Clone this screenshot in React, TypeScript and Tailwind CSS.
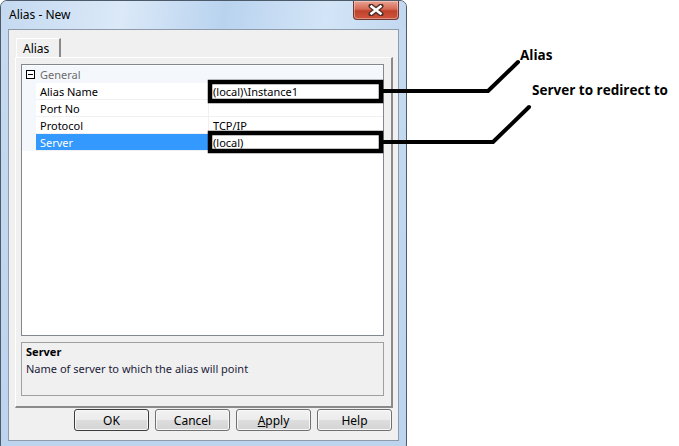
import React from "react";

type Prop = { name: string; value: string; selected?: boolean };

const props: Prop[] = [
  { name: "Alias Name", value: "(local)\\Instance1" },
  { name: "Port No", value: "" },
  { name: "Protocol", value: "TCP/IP" },
  { name: "Server", value: "(local)", selected: true },
];

function CloseButton() {
  return (
    <div className="mr-[7px] flex h-[19px] w-[46px] items-center justify-center rounded-b-[4px] border border-t-0 border-[#6d3a33] bg-[linear-gradient(180deg,#eaa394_0%,#d66a55_45%,#c0412b_55%,#d0563e_100%)] shadow-[inset_0_0_0_1px_rgba(255,255,255,0.35)]">
      <svg width="16" height="12" viewBox="0 0 16 12">
        <path d="M3 2 L13 10 M13 2 L3 10" stroke="#4a2a26" strokeWidth="5" strokeLinecap="round" />
        <path d="M3.5 2.5 L12.5 9.5 M12.5 2.5 L3.5 9.5" stroke="#ffffff" strokeWidth="2.6" strokeLinecap="square" />
      </svg>
    </div>
  );
}

function PropertyGrid() {
  return (
    <div className="h-[272px] w-[363px] border border-[#828790] bg-white pt-[1px]">
      {/* category header */}
      <div className="flex h-[17px] items-center bg-[#f4f7fc]">
        <div className="flex w-[14px] justify-end">
          <div className="mr-[1px] flex h-[9px] w-[9px] items-center justify-center border border-black bg-white">
            <div className="h-px w-[5px] bg-black" />
          </div>
        </div>
        <span className="pl-[4px] text-[#6d6d6d]">General</span>
      </div>
      {props.map((p) => (
        <div key={p.name} className="flex h-[17px]">
          <div className="w-[14px] bg-[#f4f7fc]" />
          <div
            className={
              p.selected
                ? "flex w-[172px] items-center border-b border-[#f0f0f0] bg-[#3399ff] pl-[4px] text-white"
                : "flex w-[172px] items-center border-b border-[#f0f0f0] pl-[4px]"
            }
          >
            {p.name}
          </div>
          <div className="flex flex-1 items-center border-b border-l border-[#f0f0f0] pl-[4px]">
            {p.value}
          </div>
        </div>
      ))}
    </div>
  );
}

function DialogButton({ children, primary }: { children: React.ReactNode; primary?: boolean }) {
  return (
    <div
      className={
        primary
          ? "flex h-[22px] w-[75px] items-center justify-center rounded-[3px] border border-[#3c3c3c] bg-[linear-gradient(180deg,#f2f2f2_0%,#ebebeb_50%,#dddddd_51%,#d4d4d4_100%)] shadow-[inset_0_0_0_1px_#f8f8f8] text-[12px]"
          : "flex h-[22px] w-[75px] items-center justify-center rounded-[3px] border border-[#707070] bg-[linear-gradient(180deg,#f2f2f2_0%,#ebebeb_50%,#dddddd_51%,#d4d4d4_100%)] shadow-[inset_0_0_0_1px_#f8f8f8] text-[12px]"
      }
    >
      {children}
    </div>
  );
}

function AliasDialog() {
  return (
    <div className="flex h-[452px] w-[407px] shrink-0 flex-col rounded-[7px] border border-[#4d5a69] bg-[linear-gradient(180deg,#c6dbf1_0%,#bcd4ee_100%)]">
      <div className="flex h-[28px] items-start justify-between rounded-t-[6px] bg-[linear-gradient(100deg,#c4d9f0_0%,#dbe9f8_30%,#b9d3ef_55%,#d3e5f7_80%,#c2d8f0_100%)]">
        <span className="pl-[8px] pt-[6px] text-[12px] text-black">Alias - New</span>
        <CloseButton />
      </div>

      <div className="mx-[7px] flex h-[412px] flex-col border border-[#8d9bab] bg-[#f0f0f0]">
        {/* tab strip */}
        <div className="mt-[8px] flex pl-[6px]">
          <div className="ml-[1px] flex h-[19px] w-[45px] items-center border-l border-t border-r-2 border-l-white border-t-white border-r-[#8a8a8a] bg-[#f0f0f0] pl-[6px] text-[12px]">
            Alias
          </div>
        </div>

        {/* tab page */}
        <div className="ml-[6px] h-[351px] w-[378px] border-l border-t border-b-2 border-r-2 border-l-white border-t-white border-b-[#8a8a8a] border-r-[#8a8a8a] pl-[5px] pt-[6px]">
          <PropertyGrid />
          <div className="mt-[6px] h-[54px] w-[363px] border border-[#a0a0a0] px-[4px] pt-[1px] text-[#1b1b3a]">
            <div className="font-bold text-black">Server</div>
            <div className="mt-[2px]">Name of server to which the alias will point</div>
          </div>
        </div>

        <div className="mt-[1px] flex justify-end gap-[6px] pr-[6px]">
          <DialogButton primary>OK</DialogButton>
          <DialogButton>Cancel</DialogButton>
          <DialogButton>
            <span>
              <span className="underline">A</span>pply
            </span>
          </DialogButton>
          <DialogButton>Help</DialogButton>
        </div>
      </div>
    </div>
  );
}

function Callouts() {
  return (
    <>
      <svg className="pointer-events-none absolute left-0 top-0" width="679" height="446">
        <rect x="210" y="82" width="171" height="19" fill="none" stroke="#000" strokeWidth="4.5" />
        <rect x="210" y="133" width="171" height="18" fill="none" stroke="#000" strokeWidth="4.5" />
        <polyline points="383,91 488,91 518,62" fill="none" stroke="#000" strokeWidth="4" strokeLinecap="round" strokeLinejoin="round" />
        <polyline points="383,142 493,142 529,107" fill="none" stroke="#000" strokeWidth="4" strokeLinecap="round" strokeLinejoin="round" />
      </svg>
      <div className="absolute left-[520px] top-[46px] font-['Open_Sans',sans-serif] text-[13.5px] leading-[18px] font-bold">Alias</div>
      <div className="absolute left-[532px] top-[81px] font-['Open_Sans',sans-serif] text-[13.5px] leading-[18px] font-bold">
        Server to redirect to
      </div>
    </>
  );
}

export default function App() {
  return (
    <div className="relative h-[446px] w-[679px] overflow-hidden bg-white font-['Noto_Sans',sans-serif] text-[11px] leading-[15px] text-black">
      <AliasDialog />
      <Callouts />
    </div>
  );
}
